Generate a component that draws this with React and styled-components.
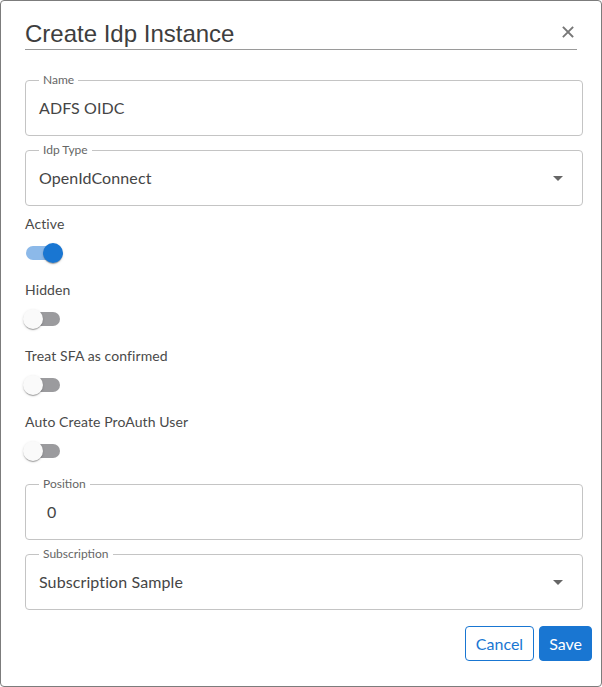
import React from "react";
import styled, { createGlobalStyle } from "styled-components";

const Global = createGlobalStyle`
  html, body { margin: 0; padding: 0; background: #ffffff; }
  * { box-sizing: border-box; }
`;

const Dialog = styled.div`
  width: 602px;
  height: 687px;
  border: 1px solid #7c7c7c;
  border-radius: 4px;
  background: #fff;
  display: flex;
  flex-direction: column;
  font-family: Lato, "Segoe UI", "Open Sans", sans-serif;
  color: #444;
`;

const Header = styled.div`
  display: flex;
  align-items: flex-start;
  margin: 18px 24px 0 24px;
  padding-bottom: 1px;
  border-bottom: 1px solid #9a9a9a;
`;

const Title = styled.h2`
  flex: 1;
  margin: 0;
  font-family: "Liberation Sans", Arial, sans-serif;
  font-weight: 400;
  font-size: 24px;
  line-height: 29px;
  color: #3e3e3e;
`;

const CloseButton = styled.button`
  border: 0;
  background: transparent;
  padding: 0;
  margin: 7px 3px 0 0;
  width: 12px;
  height: 12px;
  display: flex;
  cursor: pointer;
`;

const Content = styled.div`
  display: flex;
  flex-direction: column;
  padding: 30px 18px 0 24px;
`;

const Field = styled.div`
  position: relative;
  height: 56px;
  border: 1px solid #c4c4c4;
  border-radius: 4px;
  display: flex;
  align-items: center;
  padding: 0 19px 0 ${(p) => p.$indent || 13}px;
  margin-top: ${(p) => p.$gap}px;
`;

const FloatLabel = styled.span`
  position: absolute;
  top: -9px;
  left: 13px;
  padding: 0 4px;
  background: #fff;
  font-size: 12px;
  line-height: 16px;
  color: #666;
`;

const Value = styled.span`
  flex: 1;
  font-size: 16px;
  line-height: 20px;
  letter-spacing: 0.1px;
  color: #454545;
`;

const Caret = styled.span`
  width: 0;
  height: 0;
  border-left: 5px solid transparent;
  border-right: 5px solid transparent;
  border-top: 5px solid #666;
`;

const ToggleGroup = styled.div`
  display: flex;
  flex-direction: column;
  margin-top: 8px;
`;

const ToggleLabel = styled.span`
  font-size: 14px;
  line-height: 20px;
  letter-spacing: 0.1px;
  color: #4a4a4a;
`;

const SwitchRow = styled.div`
  height: 38px;
  display: flex;
  align-items: center;
`;

const Switch = styled.span`
  position: relative;
  width: 40px;
  height: 20px;
  margin-left: -2px;
  display: inline-flex;
  align-items: center;
  padding: 0 3px;

  &::before {
    content: "";
    display: block;
    width: 34px;
    height: 14px;
    border-radius: 7px;
    background: ${(p) => (p.$on ? "#8cb9e9" : "#9b9b9e")};
  }

  &::after {
    content: "";
    position: absolute;
    top: 0;
    left: ${(p) => (p.$on ? "20px" : "0")};
    width: 20px;
    height: 20px;
    border-radius: 50%;
    background: ${(p) => (p.$on ? "#1976d2" : "#fafafa")};
    box-shadow: 0px 2px 1px -1px rgba(0, 0, 0, 0.2),
      0px 1px 1px 0px rgba(0, 0, 0, 0.14), 0px 1px 3px 0px rgba(0, 0, 0, 0.12);
  }
`;

const Footer = styled.div`
  display: flex;
  justify-content: flex-end;
  gap: 5px;
  padding: 16px 9px 0 0;
`;

const Button = styled.button`
  height: 35px;
  padding: 0 ${(p) => p.$pad}px;
  border-radius: 4px;
  border: 1px solid #1976d2;
  font-family: Lato, "Segoe UI", "Open Sans", sans-serif;
  font-size: 16px;
  background: ${(p) => (p.$primary ? "#1976d2" : "#fff")};
  color: ${(p) => (p.$primary ? "#fff" : "#1976d2")};
  cursor: pointer;
`;

function TextField({ label, value, select, gap, indent }) {
  return (
    <Field $gap={gap} $indent={indent}>
      <FloatLabel>{label}</FloatLabel>
      <Value>{value}</Value>
      {select && <Caret />}
    </Field>
  );
}

function Toggle({ label, on }) {
  return (
    <ToggleGroup>
      <ToggleLabel>{label}</ToggleLabel>
      <SwitchRow>
        <Switch $on={on} />
      </SwitchRow>
    </ToggleGroup>
  );
}

export default function App() {
  return (
    <>
      <Global />
      <Dialog>
        <Header>
          <Title>Create Idp Instance</Title>
          <CloseButton aria-label="close">
            <svg width="12" height="12" viewBox="0 0 12 12">
              <path d="M1.5 1.5 L10.5 10.5 M10.5 1.5 L1.5 10.5" stroke="#777" strokeWidth="1.8" strokeLinecap="square" />
            </svg>
          </CloseButton>
        </Header>
        <Content>
          <TextField label="Name" value="ADFS OIDC" gap={0} />
          <TextField label="Idp Type" value="OpenIdConnect" select gap={14} />
          <Toggle label="Active" on />
          <Toggle label="Hidden" />
          <Toggle label="Treat SFA as confirmed" />
          <Toggle label="Auto Create ProAuth User" />
          <TextField label="Position" value="0" gap={14} indent={21} />
          <TextField label="Subscription" value="Subscription Sample" select gap={14} />
        </Content>
        <Footer>
          <Button $pad={10}>Cancel</Button>
          <Button $pad={9} $primary>Save</Button>
        </Footer>
      </Dialog>
    </>
  );
}
